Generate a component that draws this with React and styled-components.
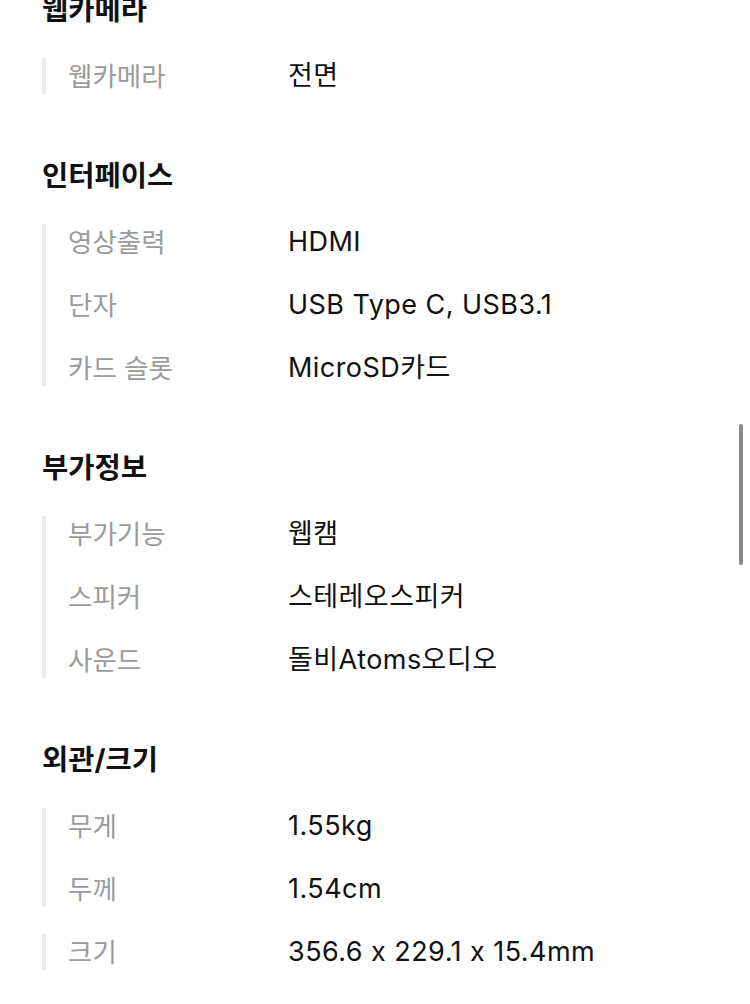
import React from "react";
import styled, { createGlobalStyle } from "styled-components";

const GlobalStyle = createGlobalStyle`
  html, body {
    margin: 0;
    padding: 0;
    background: #ffffff;
  }
  body {
    font-family: Inter, "Noto Sans CJK KR", "Noto Sans", sans-serif;
    font-feature-settings: "calt" 0;
    color: #111111;
    -webkit-font-smoothing: antialiased;
  }
`;

const Viewport = styled.div`
  position: relative;
  height: 1004px;
  overflow: hidden;
`;

const Page = styled.main`
  display: flex;
  flex-direction: column;
  gap: 62px;
  padding: 0 42px;
  margin-top: -10px;
`;

const Section = styled.section`
  display: flex;
  flex-direction: column;
`;

const Title = styled.h2`
  margin: 0 0 28px;
  font-size: 28.5px;
  line-height: 40px;
  font-weight: 700;
  color: #111111;
`;

const Groups = styled.div`
  display: flex;
  flex-direction: column;
  gap: 27px;
`;

const List = styled.dl`
  margin: 0;
  display: flex;
  flex-direction: column;
  gap: 27px;
  border-left: 4px solid #ececec;
  padding-left: 22px;
`;

const Row = styled.div`
  display: grid;
  grid-template-columns: 220px 1fr;
  align-items: center;
  height: 36px;
`;

const Label = styled.dt`
  font-size: 26.5px;
  line-height: 36px;
  color: #9b9b9b;
  white-space: nowrap;
`;

const Value = styled.dd`
  margin: 0;
  font-size: 27px;
  line-height: 36px;
  letter-spacing: 0.45px;
  color: #111111;
  white-space: nowrap;
`;

const ScrollThumb = styled.div`
  position: absolute;
  top: 424px;
  right: 7px;
  width: 4px;
  height: 141px;
  border-radius: 3px;
  background: #8a8a8a;
`;

const sections = [
  { title: "웹카메라", groups: [[["웹카메라", "전면"]]] },
  {
    title: "인터페이스",
    groups: [
      [
        ["영상출력", "HDMI"],
        ["단자", "USB Type C, USB3.1"],
        ["카드 슬롯", "MicroSD카드"],
      ],
    ],
  },
  {
    title: "부가정보",
    groups: [
      [
        ["부가기능", "웹캠"],
        ["스피커", "스테레오스피커"],
        ["사운드", "돌비Atoms오디오"],
      ],
    ],
  },
  {
    title: "외관/크기",
    groups: [
      [
        ["무게", "1.55kg"],
        ["두께", "1.54cm"],
      ],
      [["크기", "356.6 x 229.1 x 15.4mm"]],
    ],
  },
];

export default function App() {
  return (
    <>
      <GlobalStyle />
      <Viewport>
        <Page>
          {sections.map((s) => (
            <Section key={s.title}>
              <Title>{s.title}</Title>
              <Groups>
                {s.groups.map((g, gi) => (
                  <List key={gi}>
                    {g.map(([k, v]) => (
                      <Row key={k}>
                        <Label>{k}</Label>
                        <Value>{v}</Value>
                      </Row>
                    ))}
                  </List>
                ))}
              </Groups>
            </Section>
          ))}
        </Page>
        <ScrollThumb />
      </Viewport>
    </>
  );
}
